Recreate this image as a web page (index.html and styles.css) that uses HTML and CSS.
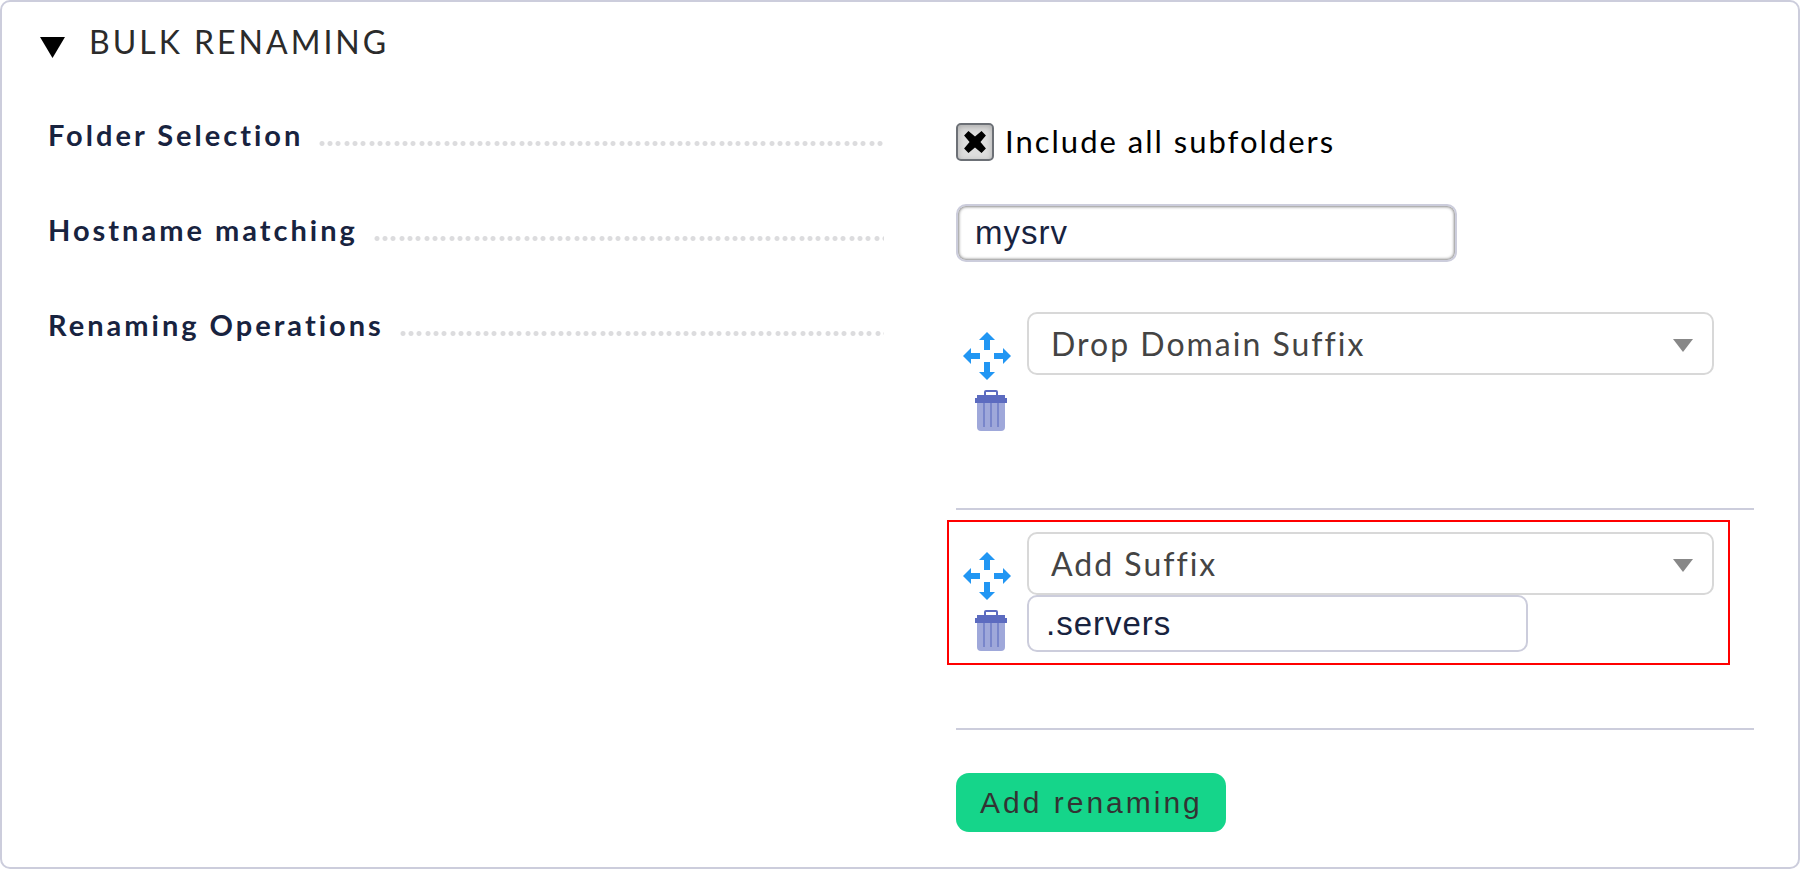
FILE: index.html
```
<!DOCTYPE html>
<html lang="en">
<head>
<meta charset="utf-8">
<title>Bulk renaming</title>
<link rel="stylesheet" href="styles.css">
</head>
<body>
<svg class="sprite" aria-hidden="true">
  <symbol id="move" viewBox="0 0 48 48">
    <path fill="#2196f3" d="M24 0l8 8h-5v10h-6V8h-5zM24 48l-8-8h5V30h6v10h5zM0 24l8-8v5h9v6H8v5zM48 24l-8 8v-5h-9v-6h9v-5z"/>
  </symbol>
  <symbol id="trash" viewBox="0 0 32 42">
    <path fill="#9fa8da" d="M2 11h28v26a4 4 0 0 1-4 4H6a4 4 0 0 1-4-4z"/>
    <path fill="#7986cb" d="M8 12h2v25H8zM15 12h2v25h-2zM22 12h2v25h-2z"/>
    <path fill="#5c6bc0" fill-rule="evenodd" d="M11 0h10q2 0 2 2v3h7v3h2v5H0V8h2V5h7V2q0-2 2-2zm0 2v3h10V2z"/>
  </symbol>
</svg>
<form class="panel">
  <h2 class="panel-title">
    <svg class="toggle" viewBox="0 0 24 20" aria-hidden="true"><path d="M0 0h24L12 20z"/></svg>
    BULK RENAMING
  </h2>
  <div class="rows">
    <div class="row">
      <div class="legend"><label for="subfolders">Folder Selection</label></div>
      <div class="value check">
        <span class="box"><input type="checkbox" id="subfolders" checked><svg class="cross" viewBox="0 0 22 22" aria-hidden="true"><path d="M5 1l6 5 6-5 4 4-5 6 5 6-4 4-6-5-6 5-4-4 5-6-5-6z"/></svg></span>
        <label for="subfolders">Include all subfolders</label>
      </div>
    </div>
    <div class="row centered">
      <div class="legend"><label for="host">Hostname matching</label></div>
      <div class="value"><input class="text focused" id="host" type="text" value="mysrv"></div>
    </div>
    <div class="row">
      <div class="legend"><span>Renaming Operations</span></div>
      <div class="value">
        <div class="operation">
          <div class="tools">
            <button type="button" class="tool" aria-label="Move"><svg class="icon-move"><use href="#move"/></svg></button>
            <button type="button" class="tool" aria-label="Delete"><svg class="icon-trash"><use href="#trash"/></svg></button>
          </div>
          <div class="fields">
            <div class="select"><select aria-label="Renaming operation"><option>Drop Domain Suffix</option></select></div>
          </div>
        </div>
        <div class="operation marked">
          <div class="tools">
            <button type="button" class="tool" aria-label="Move"><svg class="icon-move"><use href="#move"/></svg></button>
            <button type="button" class="tool" aria-label="Delete"><svg class="icon-trash"><use href="#trash"/></svg></button>
          </div>
          <div class="fields">
            <div class="select"><select aria-label="Renaming operation"><option>Add Suffix</option></select></div>
            <input class="text" type="text" value=".servers" aria-label="Suffix">
          </div>
        </div>
        <button type="button" class="add">Add renaming</button>
      </div>
    </div>
  </div>
</form>
</body>
</html>
```
FILE: styles.css
```
* { box-sizing: border-box; }

body {
  margin: 0;
  background: #fff;
  font-family: Lato, sans-serif;
  color: #000;
}

.sprite { display: none; }

.panel {
  padding: 20px 44px 35px 38px;
  border: 2px solid #cccddc;
  border-radius: 10px;
}

.panel-title {
  display: flex;
  align-items: center;
  gap: 24px;
  margin: 0;
  font-size: 32px;
  line-height: 40px;
  font-weight: 400;
  letter-spacing: 3px;
  color: #2b2b2b;
}

.toggle {
  width: 25px;
  height: 21px;
  margin-top: 11px;
}

.rows {
  padding: 60px 0 0 8px;
}

.row {
  display: grid;
  grid-template-columns: 836fr 798fr;
  gap: 72px;
}

.row + .row { margin-top: 50px; }
.row + .centered {
  align-items: center;
  margin-top: 43px;
}

.legend {
  display: flex;
  height: 26px;
  font-size: 29px;
  line-height: 26px;
  font-weight: 700;
  letter-spacing: 3px;
  color: #18233f;
}

.centered .legend { margin-bottom: 6px; }

.legend::after {
  content: "";
  flex: 1;
  height: 5px;
  margin: 19px 0 0 16px;
  background:
    radial-gradient(circle at 3px 50%, #dcdcde 2px, transparent 3px),
    radial-gradient(circle at 11px 50%, #dcdcde 2px, transparent 3px),
    radial-gradient(circle at 19px 50%, #dcdcde 2px, transparent 3px);
  background-size: 25px 5px;
}

.check {
  display: flex;
  align-items: center;
  gap: 11px;
  padding-top: 1px;
  font-size: 31px;
  line-height: 36px;
  letter-spacing: 2px;
}

.check label { padding-bottom: 2px; }

.box {
  display: grid;
  width: 38px;
  height: 38px;
}

.box > * { grid-area: 1 / 1; }

.box input {
  appearance: none;
  width: 100%;
  height: 100%;
  margin: 0;
  border: 2px solid #6c7076;
  border-radius: 5px;
  background: #dedede;
  box-shadow: inset 0 2px 6px #aaa;
}

.cross {
  width: 24px;
  height: 24px;
  place-self: center;
  pointer-events: none;
}

.text {
  display: block;
  width: 501px;
  max-width: 100%;
  height: 57px;
  padding: 0 17px;
  border: 2px solid #cccddc;
  border-radius: 10px;
  background: #fff;
  font: 33px "Liberation Sans", Arial, sans-serif;
  letter-spacing: 1px;
  color: #18233f;
}

.focused {
  height: 58px;
  box-shadow: inset 0 0 3px 1px #888;
}

.operation {
  position: relative;
  display: flex;
  padding-bottom: 76px;
  margin-bottom: 22px;
  border-bottom: 2px solid #cccddc;
}

.marked::after {
  content: "";
  position: absolute;
  inset: -12px 24px 63px -9px;
  border: 2px solid #f00;
  pointer-events: none;
}

.tools {
  display: flex;
  flex-direction: column;
  gap: 10px;
  width: 71px;
  padding: 20px 0 0 7px;
}

.tool {
  display: flex;
  padding: 0;
  border: 0;
  background: none;
}

.icon-move { width: 48px; height: 48px; }
.icon-trash { width: 32px; height: 42px; margin-left: 12px; }

.fields {
  flex: 1;
  margin-right: 40px;
}

.select { position: relative; }

.select select {
  appearance: none;
  display: block;
  width: 100%;
  height: 63px;
  padding: 0 22px;
  border: 2px solid #d8d8d8;
  border-radius: 10px;
  background: #fff;
  font: 32px Lato, sans-serif;
  letter-spacing: 2px;
  color: #444;
}

.select::after {
  content: "";
  position: absolute;
  top: 27px;
  right: 21px;
  border: 10px solid transparent;
  border-width: 13px 10px 0;
  border-top-color: #888;
  pointer-events: none;
}

.add {
  display: block;
  height: 59px;
  padding: 0 23px 0 24px;
  margin-top: 43px;
  border: 0;
  border-radius: 13px;
  background: #15d58a;
  font: 30px "Liberation Sans", Arial, sans-serif;
  letter-spacing: 3px;
  color: #333;
}
```
